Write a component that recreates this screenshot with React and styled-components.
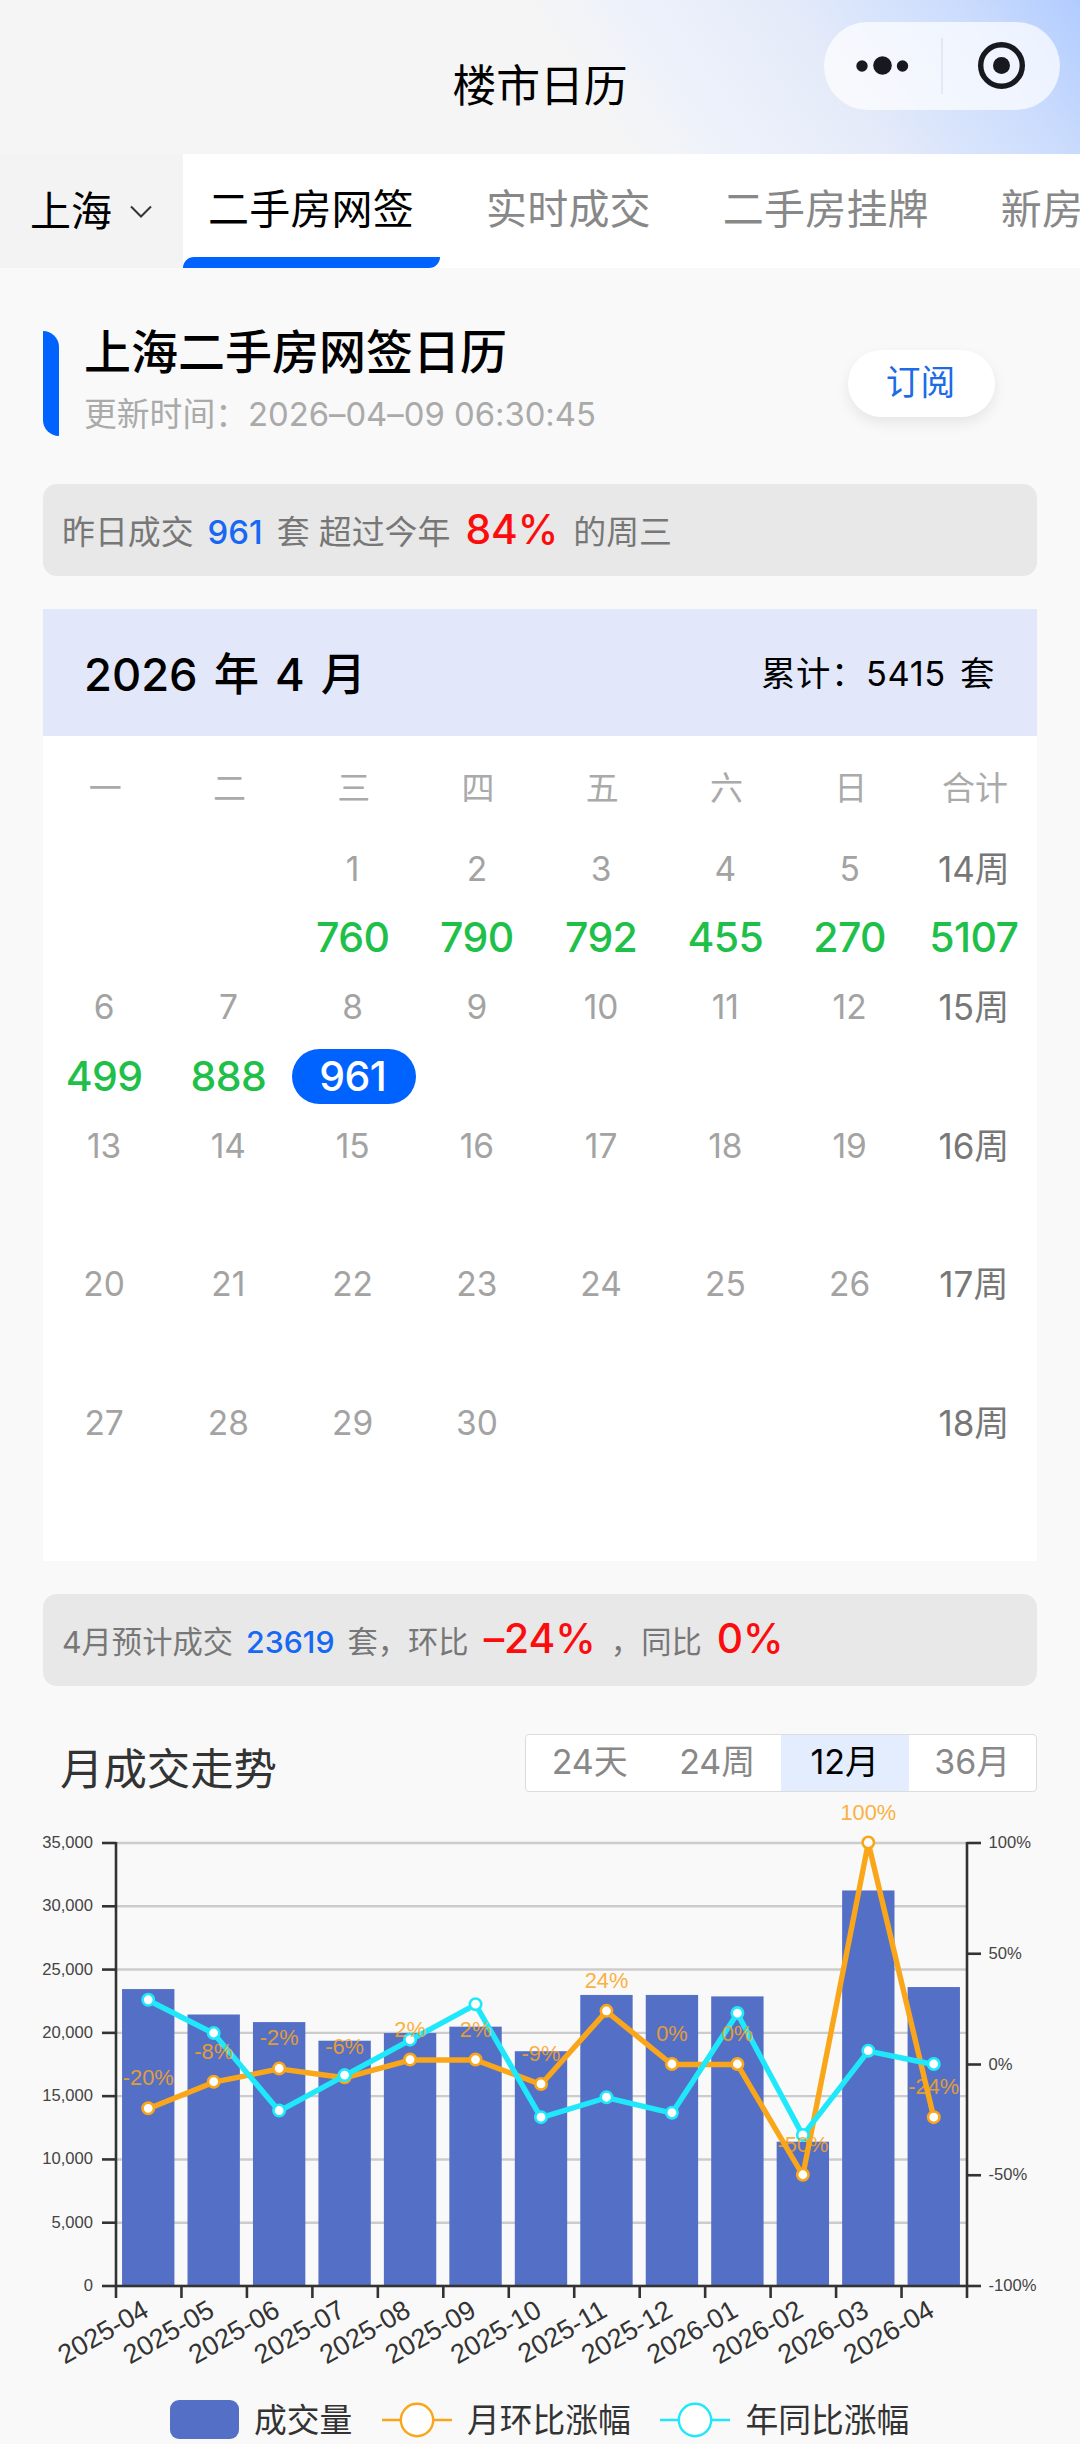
import React from "react";
import styled, { createGlobalStyle } from "styled-components";

const GlobalStyle = createGlobalStyle`
    * {
        box-sizing: border-box;
    }
    body {
        margin: 0;
        background: #f9f9f9;
        color: #000;
        font-family: Inter, "Noto Sans CJK SC", sans-serif;
        font-feature-settings: "calt" 0;
    }
`;

const Page = styled.div`
    width: 1080px;
    height: 2444px;
    overflow: hidden;
    background: #f9f9f9;
`;

const Header = styled.header`
    height: 154px;
    display: grid;
    grid-template-columns: 1fr auto 1fr;
    background: linear-gradient(
        55deg,
        #f5f5f5 53%,
        #ecf1fb 63%,
        #e6ebf9 74%,
        #d6e3fc 83%,
        #c8dafd 91%,
        #b0ccff 100%
    );
`;

const HeaderTitle = styled.h1`
    grid-column: 2;
    margin: 0;
    padding-top: 19px;
    align-self: center;
    font-size: 43.8px;
    line-height: 60px;
    font-weight: 400;
`;

const Capsule = styled.div`
    justify-self: end;
    width: 236px;
    height: 88px;
    margin: 22px 20px 0 0;
    border-radius: 44px;
    background: rgba(255, 255, 255, 0.7);
`;

const TabBar = styled.nav`
    height: 114px;
    display: flex;
    background: #fff;
    overflow: hidden;
`;

const City = styled.div`
    flex: none;
    width: 183px;
    padding: 0 0 7px 30px;
    display: flex;
    align-items: center;
    gap: 18px;
    background: #f3f3f3;
    font-size: 41px;

    svg {
        margin-top: 9px;
    }
`;

const TabList = styled.div`
    display: flex;
    gap: 21px;
`;

const Tab = styled.div`
    flex: none;
    display: flex;
    flex-direction: column;
    justify-content: space-between;
    font-size: 41px;
    line-height: 60px;
    white-space: nowrap;
    color: ${props => (props.$active ? "#000" : "#888")};

    span {
        padding: 25px 26px 0 25px;
        letter-spacing: 0.2px;
    }

    &::after {
        content: "";
        height: 11px;
        border-radius: 11px 0 11px 0;
        background: ${props => (props.$active ? "#0062ff" : "transparent")};
    }
`;

const Content = styled.main`
    padding: 0 43px;
`;

const Heading = styled.section`
    height: 216px;
    padding-top: 63px;
    display: flex;
    align-items: flex-start;
`;

const Marker = styled.div`
    width: 16px;
    height: 105px;
    margin-right: 25px;
    border-radius: 0 16px 0 16px;
    background: #0062ff;
`;

const HeadingText = styled.div`
    flex: 1;

    h2 {
        margin: -13px 0 0;
        font-size: 47px;
        line-height: 68px;
        font-weight: 500;
    }

    p {
        margin: 4px 0 0;
        font-size: 32.8px;
        line-height: 48px;
        color: #aaa;
    }
`;

const Subscribe = styled.button`
    width: 147px;
    height: 67px;
    margin: 19px 42px 0 0;
    padding: 0 2px 7px 0;
    border: 0;
    border-radius: 34px;
    background: #fff;
    box-shadow: 0 6px 14px rgba(0, 0, 0, 0.08);
    color: #1e6be6;
    font-family: inherit;
    font-size: 34.8px;
`;

const Notice = styled.section`
    height: 92px;
    padding: 0 19px;
    display: flex;
    align-items: center;
    border-radius: 14px;
    background: #e8e8e8;
    color: #777;
    font-size: ${props => props.$size}px;
    line-height: 60px;
    white-space: pre;
`;

const NoticeLine = styled.div`
    display: flex;
    align-items: baseline;
`;

const Count = styled.span`
    margin: 0 ${props => props.$gap}px;
    color: #1768f2;
    font-weight: 500;
`;

const Percent = styled.span`
    margin: 0 ${props => props.$gap}px;
    color: #fb0d0d;
    font-size: 40.8px;
    font-weight: 500;
`;

const Calendar = styled.section`
    height: 952px;
    margin: 33px 0;
    background: #fff;
`;

const CalendarHeader = styled.div`
    height: 127px;
    padding: 0 42px 4px 41px;
    display: flex;
    align-items: center;
    justify-content: space-between;
    background: #e2e8fa;
    font-size: 34.4px;
    letter-spacing: 0.6px;
    word-spacing: 4px;

    strong {
        font-size: 45.3px;
        font-weight: 500;
        letter-spacing: 0;
    }
`;

const Week = styled.div`
    display: grid;
    grid-template-columns: repeat(8, 1fr);
    text-align: center;
`;

const WeekHead = styled(Week)`
    padding-top: 6px;
    color: #aaa;
    font-size: 33px;
    line-height: 92px;
`;

const Day = styled.div`
    height: 138.5px;
    display: grid;
    grid-template-rows: 1fr 1fr;
    place-items: center;
    color: ${props => (props.$total ? "#777" : "#a3a3a3")};
    font-size: ${props => (props.$total ? 35 : 33.5)}px;
    line-height: 50px;

    > :first-child {
        margin-right: 2px;
    }
`;

const Amount = styled.div`
    width: 100%;
    height: 55px;
    padding-right: 2px;
    border-radius: 28px;
    line-height: 55px;
    font-size: 41px;
    font-weight: 500;
    letter-spacing: -0.6px;
    color: ${props => (props.$active ? "#fff" : "#1fc04a")};
    background: ${props => (props.$active ? "#0062ff" : "transparent")};
`;

const TrendBar = styled.div`
    height: 57px;
    margin-top: 48px;
    padding-left: 17px;
    display: flex;
    align-items: center;
    justify-content: space-between;

    h3 {
        margin: 13px 0 0;
        font-size: 43.4px;
        line-height: 60px;
        font-weight: 400;
        color: #333;
    }
`;

const Segments = styled.div`
    width: 512px;
    height: 58px;
    display: grid;
    grid-template-columns: repeat(4, 1fr);
    border: 1.5px solid #dcdcdc;
    border-radius: 4px;
    overflow: hidden;
    background: #fff;
`;

const Segment = styled.div`
    text-align: center;
    font-size: 34px;
    line-height: 54px;
    color: ${props => (props.$active ? "#000" : "#888")};
    background: ${props => (props.$active ? "#e4edfe" : "transparent")};
`;

const Chart = styled.svg`
    display: block;
    width: 1080px;
    height: 604px;
    margin-left: -43px;
    font-family: "Liberation Sans", Arial, sans-serif;
`;

const Legend = styled.div`
    height: 49px;
    margin-left: 127px;
    display: flex;
    align-items: center;
    font-size: 32.8px;
    line-height: 48px;
    color: #333;

    svg {
        flex: none;
        margin-right: 15px;
    }

    span {
        margin-right: 29.5px;
        white-space: nowrap;
    }
`;

const tabs = ["二手房网签", "实时成交", "二手房挂牌", "新房"];
const weekdays = ["一", "二", "三", "四", "五", "六", "日", "合计"];
const amounts = { 1: 760, 2: 790, 3: 792, 4: 455, 5: 270, 6: 499, 7: 888, 8: 961 };
const weeks = [
    { no: 14, first: -1, total: 5107 },
    { no: 15, first: 6 },
    { no: 16, first: 13 },
    { no: 17, first: 20 },
    { no: 18, first: 27 }
];

const months = [
    { name: "2025-04", volume: 23460, mom: -20, yoy: 29 },
    { name: "2025-05", volume: 21450, mom: -8, yoy: 14 },
    { name: "2025-06", volume: 20850, mom: -2, yoy: -21 },
    { name: "2025-07", volume: 19380, mom: -6, yoy: -5 },
    { name: "2025-08", volume: 19985, mom: 2, yoy: 11 },
    { name: "2025-09", volume: 20490, mom: 2, yoy: 27 },
    { name: "2025-10", volume: 18550, mom: -9, yoy: -24 },
    { name: "2025-11", volume: 22995, mom: 24, yoy: -15 },
    { name: "2025-12", volume: 22995, mom: 0, yoy: -22 },
    { name: "2026-01", volume: 22880, mom: 0, yoy: 23 },
    { name: "2026-02", volume: 11400, mom: -50, yoy: -32 },
    { name: "2026-03", volume: 31250, mom: 100, yoy: 6 },
    { name: "2026-04", volume: 23619, mom: -24, yoy: 0 }
];

const ORANGE = "#faa61a";
const CYAN = "#1fe8fb";

// plot area inside the svg
const left = 116;
const right = 967;
const top = 52;
const bottom = 495;
const step = (right - left) / months.length;

const centerX = i => left + step * (i + 0.5) - 0.5;
const volumeY = v => bottom - ((bottom - top) * v) / 35000;
const percentY = p => bottom - ((bottom - top) * (p + 100)) / 200;

const Line = ({ field, color }) => (
    <g stroke={color}>
        <polyline
            fill="none"
            strokeWidth="5.4"
            strokeLinejoin="bevel"
            points={months.map((m, i) => `${centerX(i)},${percentY(m[field])}`).join(" ")}
        />
        {months.map((m, i) => (
            <circle key={m.name} cx={centerX(i)} cy={percentY(m[field]) - 0.5} r="5.7" fill="#fff" strokeWidth="2.6" />
        ))}
    </g>
);

const TrendChart = () => (
    <Chart viewBox="0 0 1080 604">
        {[0, 5000, 10000, 15000, 20000, 25000, 30000, 35000].map(v => (
            <g key={v}>
                <line x1={left} x2={right} y1={volumeY(v)} y2={volumeY(v)} stroke="#ccc" strokeWidth="2.4" />
                <line x1={left - 14} x2={left} y1={volumeY(v)} y2={volumeY(v)} stroke="#333" strokeWidth="2.6" />
                <text x="93" y={volumeY(v) + 5} textAnchor="end" fontSize="16.6" fill="#444">
                    {v.toLocaleString("en-US")}
                </text>
            </g>
        ))}
        {months.map((m, i) => (
            <rect
                key={m.name}
                x={centerX(i) - step * 0.4}
                y={volumeY(m.volume)}
                width={step * 0.8}
                height={bottom - volumeY(m.volume)}
                fill="#546fc6"
            />
        ))}
        {[-100, -50, 0, 50, 100].map(p => (
            <g key={p}>
                <line x1={right} x2={right + 14} y1={percentY(p)} y2={percentY(p)} stroke="#333" strokeWidth="2.6" />
                <text x="988.5" y={percentY(p) + 5} fontSize="16.6" fill="#444">{p}%</text>
            </g>
        ))}
        <g stroke="#333" strokeWidth="2.6">
            <line x1={left} x2={left} y1={top - 1} y2={bottom + 12} />
            <line x1={right} x2={right} y1={top - 1} y2={bottom + 12} />
            <line x1={left} x2={right} y1={bottom} y2={bottom} />
            {months.slice(1).map((m, i) => (
                <line key={m.name} x1={left + step * (i + 1)} x2={left + step * (i + 1)} y1={bottom} y2={bottom + 12} />
            ))}
        </g>
        {months.map((m, i) => (
            <text
                key={m.name}
                transform={`translate(${centerX(i) - 2.5}, ${bottom + 21}) rotate(-30)`}
                y="9.5"
                textAnchor="end"
                fontSize="27"
                fill="#333"
            >
                {m.name}
            </text>
        ))}
        <Line field="mom" color={ORANGE} />
        <Line field="yoy" color={CYAN} />
        {months.map((m, i) => (
            <text
                key={m.name}
                x={centerX(i)}
                y={percentY(m.mom) - 23.5}
                textAnchor="middle"
                fontSize="21.8"
                fill={ORANGE}
                opacity="0.85"
            >
                {m.mom}%
            </text>
        ))}
    </Chart>
);

const LineSymbol = ({ color }) => (
    <svg width="70" height="40">
        <line x1="0" x2="70" y1="20" y2="20" stroke={color} strokeWidth="2.4" />
        <circle cx="35" cy="20" r="16.2" fill="#fff" stroke={color} strokeWidth="2.4" />
    </svg>
);

const App = () => (
    <Page>
        <GlobalStyle />
        <Header>
            <HeaderTitle>楼市日历</HeaderTitle>
            <Capsule>
                <svg width="236" height="88" fill="#17191f">
                    <circle cx="38" cy="44" r="5.7" />
                    <circle cx="58.5" cy="43.5" r="9.3" />
                    <circle cx="78.5" cy="44" r="5.7" />
                    <rect x="117.5" y="16" width="1" height="56" fill="#d5dbe8" />
                    <circle cx="177.5" cy="43.5" r="20.8" fill="none" stroke="#17191f" strokeWidth="5.4" />
                    <circle cx="177.5" cy="43.5" r="8.5" />
                </svg>
            </Capsule>
        </Header>
        <TabBar>
            <City>
                上海
                <svg width="22" height="14" fill="none" stroke="#333" strokeWidth="2">
                    <path d="M1 1.5 L11 11.5 L21 1.5" />
                </svg>
            </City>
            <TabList>
                {tabs.map((tab, i) => (
                    <Tab key={tab} $active={i === 0}>
                        <span>{tab}</span>
                    </Tab>
                ))}
            </TabList>
        </TabBar>
        <Content>
            <Heading>
                <Marker />
                <HeadingText>
                    <h2>上海二手房网签日历</h2>
                    <p>更新时间：2026–04–09 06:30:45</p>
                </HeadingText>
                <Subscribe>订阅</Subscribe>
            </Heading>
            <Notice $size={32.9}>
                <NoticeLine>
                    昨日成交<Count $gap={14}>961</Count>套 超过今年<Percent $gap={15}>84%</Percent>的周三
                </NoticeLine>
            </Notice>
            <Calendar>
                <CalendarHeader>
                    <strong>2026 年 4 月</strong>
                    <span>累计：5415 套</span>
                </CalendarHeader>
                <WeekHead>
                    {weekdays.map(name => <div key={name}>{name}</div>)}
                </WeekHead>
                {weeks.map(week => (
                    <Week key={week.no}>
                        {[0, 1, 2, 3, 4, 5, 6].map(n => {
                            const date = week.first + n;
                            const inMonth = date > 0 && date <= 30;
                            return (
                                <Day key={n}>
                                    <div>{inMonth && date}</div>
                                    {amounts[date] && <Amount $active={date === 8}>{amounts[date]}</Amount>}
                                </Day>
                            );
                        })}
                        <Day $total>
                            <div>{week.no}周</div>
                            {week.total && <Amount>{week.total}</Amount>}
                        </Day>
                    </Week>
                ))}
            </Calendar>
            <Notice $size={30.3}>
                <NoticeLine>
                    4月预计成交<Count $gap={13}>23619</Count>套，环比<Percent $gap={15}>–24%</Percent>，同比<Percent $gap={15}>0%</Percent>
                </NoticeLine>
            </Notice>
            <TrendBar>
                <h3>月成交走势</h3>
                <Segments>
                    {["24天", "24周", "12月", "36月"].map(name => (
                        <Segment key={name} $active={name === "12月"}>{name}</Segment>
                    ))}
                </Segments>
            </TrendBar>
            <TrendChart />
            <Legend>
                <svg width="69" height="39">
                    <rect width="69" height="39" rx="9" fill="#546fc6" />
                </svg>
                <span>成交量</span>
                <LineSymbol color={ORANGE} />
                <span>月环比涨幅</span>
                <LineSymbol color={CYAN} />
                <span>年同比涨幅</span>
            </Legend>
        </Content>
    </Page>
);

export default App;
